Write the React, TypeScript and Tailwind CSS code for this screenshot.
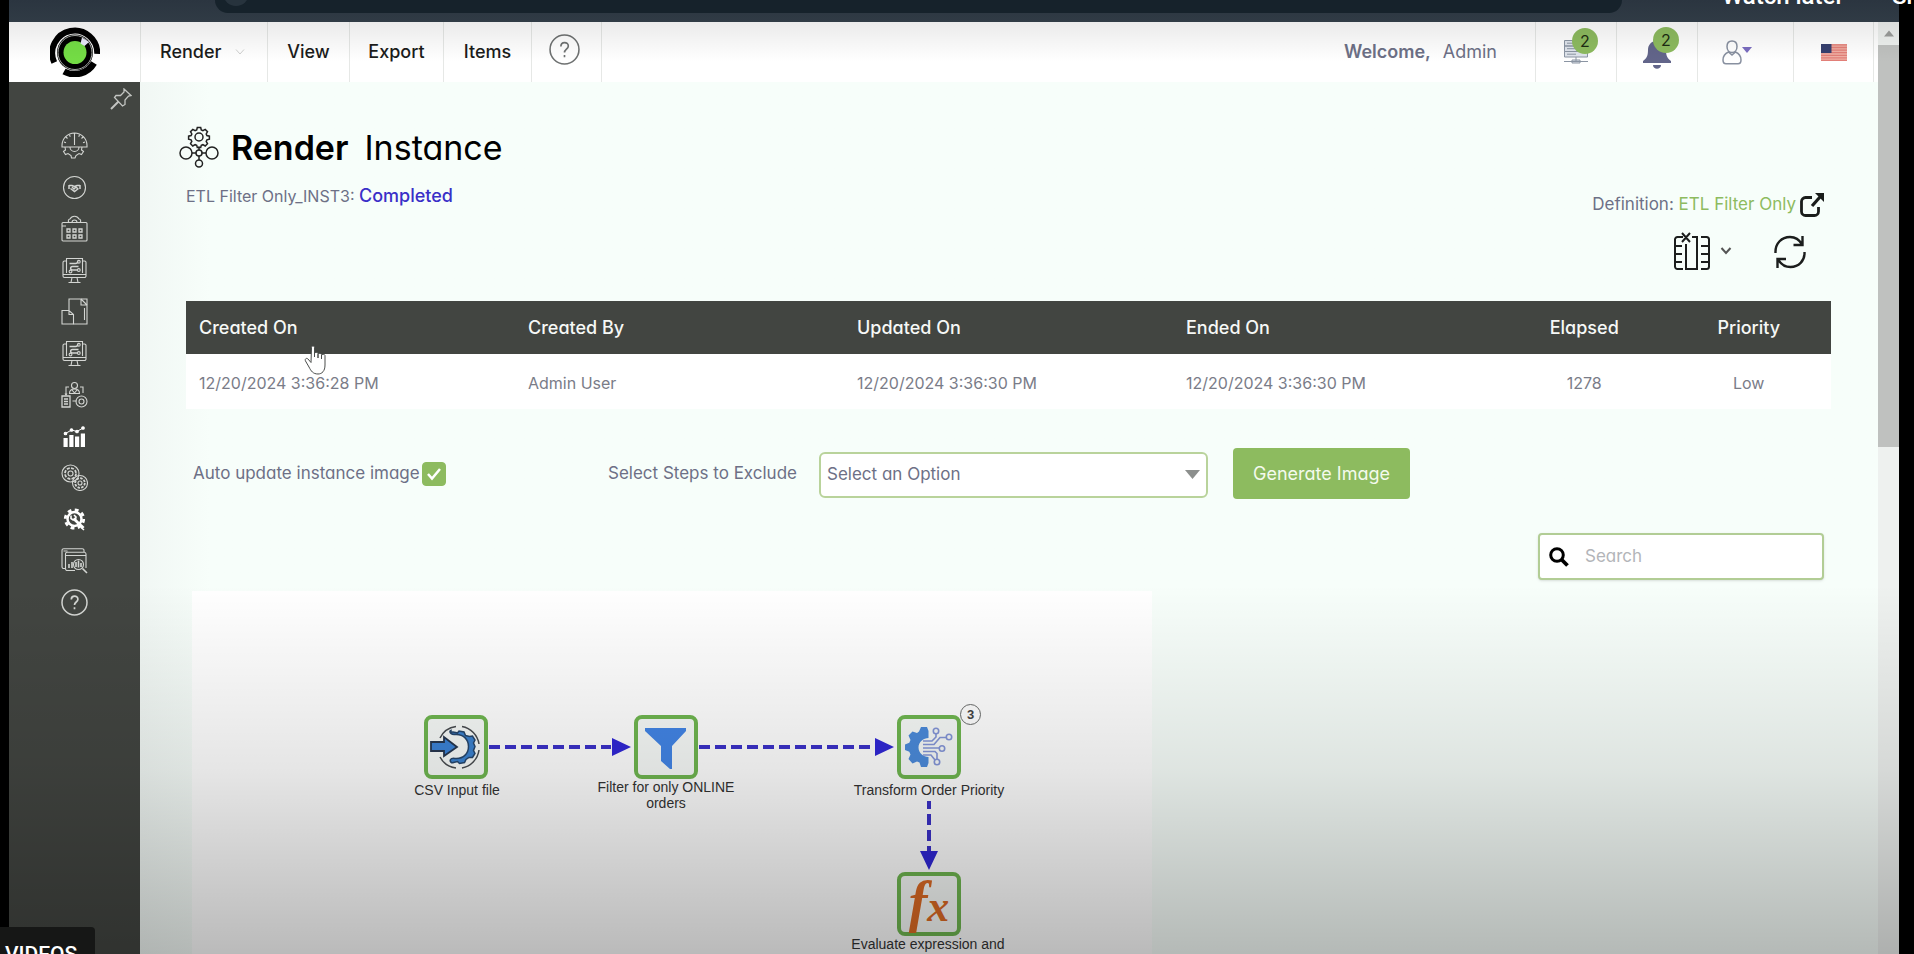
import type { ReactNode } from "react";

const menu = [
  { label: "View", cell: "w-[82px]" },
  { label: "Export", cell: "w-[94px]" },
  { label: "Items", cell: "w-[88px]" },
];

const columns = ["Created On", "Created By", "Updated On", "Ended On", "Elapsed", "Priority"];
const row = ["12/20/2024 3:36:28 PM", "Admin User", "12/20/2024 3:36:30 PM", "12/20/2024 3:36:30 PM", "1278", "Low"];

function Line({ children }: { children: ReactNode }) {
  return (
    <svg viewBox="0 0 27 27" className="size-[27px] fill-none stroke-[#d3d5d2] stroke-[1.1]" aria-hidden="true">
      {children}
    </svg>
  );
}

const flowScreen = (
  <>
    <path d="M5 4H3.500a1.500 1.500 0 0 0-1.500 1.500V19a1.500 1.500 0 0 0 1.500 1.500h20A1.500 1.500 0 0 0 25 19V5.500A1.500 1.500 0 0 0 23.500 4H22M2 17.500h23" />
    <path d="M5.500 16V1.500h16V16M11 20.500l-1 5h7l-1-5M7.500 25.500h12" />
    <path d="M8.500 6.500h6c2 0 2-1.500 3-1.500M17.500 9.500h-6c-2.500 0-2.500 3.500 0 3.500h5" strokeWidth="1.500" />
    <circle cx="17.800" cy="4.800" r="1.400" />
    <circle cx="9.500" cy="14.500" r="1.400" />
    <circle cx="17.800" cy="13" r="1.400" />
  </>
);

const sideItems: { name: string; icon: ReactNode }[] = [
  {
    name: "Dashboard",
    icon: (
      <>
        <path d="M1 13.500a12.500 12.500 0 0 1 25 0v1.500H1zM13.500 3v10M13.500 1v2M5 5l1.500 1.500M22 5l-1.500 1.500M3 10l2 .7M24 10l-2 .7M8.500 3l.8 1.800M18.500 3l-.8 1.800" />
        <path d="M9 15a4.500 4.500 0 0 0 9 0M4 15l.5 3-2 1.500 2 3 2.500-1 3 2 .5 2.500h3.500l1-2.500 3-2 2.500 1 2-3-2-1.500.5-3" />
      </>
    ),
  },
  {
    name: "Partners",
    icon: (
      <>
        <circle cx="13.500" cy="13.500" r="11" />
        <path d="M8 11v4M19 11v4M8 11.500h3l2.500 1 2.500-1h3M9.500 14.500l4 3 4-3M11 13l2 2 2-2 2 2" strokeWidth="1.500" />
      </>
    ),
  },
  {
    name: "Calendar",
    icon: (
      <>
        <rect x="1" y="7.500" width="25" height="18.500" rx="1" />
        <path d="M8 7.500a2 2 0 0 1 1-3.500 5 5 0 0 1 9 0 2 2 0 0 1 1 3.500M11 7.500a2.500 2.500 0 0 1 5 0M1 11h4" />
        <path d="M6 14h3v3H6zM12 14h3v3h-3zM18 14h3v3h-3zM6 20h3v3H6zM12 20h3v3h-3zM18 20h3v3h-3z" strokeWidth="1.300" />
      </>
    ),
  },
  { name: "Designs", icon: flowScreen },
  {
    name: "Templates",
    icon: (
      <>
        <path d="M8 12V1h18v25H12.500" />
        <path d="M1 12.500h7l4.500 4V26H1zM8 12.500v4h4.500M20 1v6h6M20 1l6 6M23.500 10v12" />
      </>
    ),
  },
  { name: "Instances", icon: flowScreen },
  {
    name: "Users",
    icon: (
      <>
        <circle cx="13.500" cy="4.500" r="3" />
        <path d="M8.500 12.500c0-3 2-4.500 5-4.500s5 1.500 5 4.500zM11 9l2.500 3L16 9M8 6H5v8M19 6h3v6M4 12.500l1 1.500 1-1.500M11.500 20h4" />
        <path d="M1 15h8v11H1zM3 18h4M3 20.500h4M3 23h4" strokeWidth="1.300" />
        <circle cx="20.500" cy="20.500" r="5.500" />
        <circle cx="20.500" cy="20.500" r="2.500" />
      </>
    ),
  },
  {
    name: "Reports",
    icon: (
      <g className="fill-white stroke-white">
        <path d="M2.500 15h4.200v9H2.500zM8.300 12h4.200v12H8.300zM14 13.500h4.200V24H14zM19.800 10.500H24V24h-4.200z" stroke="none" />
        <path d="M4.500 10.500l6-3.500 5.500 1.500 6-3.500" fill="none" strokeWidth="1" />
        <circle cx="4.500" cy="10.500" r="1.300" />
        <circle cx="10.500" cy="7" r="1.300" />
        <circle cx="16" cy="8.500" r="1.300" />
        <circle cx="22" cy="5" r="1.300" />
      </g>
    ),
  },
  {
    name: "Processes",
    icon: (
      <>
        <circle cx="9.500" cy="9.500" r="8.500" />
        <circle cx="9.500" cy="9.500" r="5.500" strokeDasharray="3 1.300" strokeWidth="1.800" />
        <circle cx="9.500" cy="9.500" r="2.500" />
        <circle cx="19" cy="19" r="7.500" />
        <circle cx="19" cy="19" r="4.800" strokeDasharray="2.500 1.200" strokeWidth="1.800" />
        <circle cx="19" cy="19" r="2" />
      </>
    ),
  },
  {
    name: "Settings",
    icon: (
      <g className="stroke-white">
        <circle cx="13.500" cy="13" r="7" strokeWidth="2.500" />
        <circle cx="13.500" cy="13" r="9.200" strokeWidth="2.800" strokeDasharray="3.800 3.425" />
        <path d="M12.500 12.500l10 9.500" strokeWidth="3" />
        <path d="M10 9.500v3l2 1.500 2.500-.5.500-2.500-2-2M20 21.500l3 2.500" strokeWidth="1.600" />
      </g>
    ),
  },
  {
    name: "Analytics",
    icon: (
      <>
        <path d="M4.500 21.500H3A1.800 1.800 0 0 1 1 19.700V3.500A1.800 1.800 0 0 1 2.800 1.700h18.400A1.800 1.800 0 0 1 23 3.500V5" />
        <path d="M14 23.500H6.500A1.800 1.800 0 0 1 4.500 21.700V7A1.800 1.800 0 0 1 6.300 5.200h17A1.800 1.800 0 0 1 25 7v14M5 8.500h20M2.500 4h4" />
        <circle cx="17.500" cy="17.500" r="5" />
        <path d="M8 21v-4M11 21v-6M15 20v-5M17.500 20.500v-7M20 20v-4M21.500 21.500l4.500 4.500" strokeWidth="1.600" />
      </>
    ),
  },
  {
    name: "Help",
    icon: (
      <>
        <circle cx="13.500" cy="13.500" r="12.500" strokeWidth="1.500" />
        <path d="M10.300 10.500c0-4.500 6.600-4.300 6.600-.3 0 2.800-3.400 2.800-3.400 5.800M13.500 18.300v2" strokeWidth="1.700" />
      </>
    ),
  },
];

function Logo() {
  return (
    <svg viewBox="0 0 50 50" className="size-[50px]" aria-hidden="true">
      <circle cx="25" cy="25.500" r="18" fill="#000" />
      <path d="M4.300 35.500A22.500 22.500 0 1 1 47.200 27" fill="none" stroke="#000" strokeWidth="6" />
      <path d="M14 44.500A22.500 22.500 0 0 0 44 36" fill="none" stroke="#000" strokeWidth="6.500" />
      <circle cx="25" cy="25.500" r="17" fill="none" stroke="#b9bdb9" strokeWidth=".9" />
      <circle cx="25" cy="25.500" r="11.500" fill="#74dd45" />
      <path d="M32 10.500l7 4.500-4.500 4-4-2.500z" fill="#e8eafa" />
    </svg>
  );
}

function Node({ place, children }: { place: string; children: ReactNode }) {
  return (
    <div className={`absolute flex size-16 items-center justify-center rounded-lg border-4 border-[#6fb650] bg-[#f7faf8] ${place}`}>
      {children}
    </div>
  );
}

function NodeLabel({ place, children }: { place: string; children: ReactNode }) {
  return (
    <p className={`absolute w-44 text-center font-['Liberation_Sans',sans-serif] text-sm leading-4 text-[#333] ${place}`}>
      {children}
    </p>
  );
}

function Count() {
  return (
    <span className="absolute -top-3 left-2 flex size-[26px] items-center justify-center rounded-full bg-[#8dbb5f] text-base text-[#1d2b12]">
      2
    </span>
  );
}

export default function App() {
  return (
    <div className="relative flex h-screen overflow-hidden bg-black pr-[15px] pl-[9px] font-[Inter,sans-serif] text-[#6d7086] [font-feature-settings:'cv11']">
      <div className="flex min-w-0 flex-1 flex-col">
        <div className="h-[22px] shrink-0 bg-linear-to-b from-[#2b3540] to-[#303b45] pr-[277px] pl-[206px]">
          <div className="h-[13px] overflow-hidden rounded-b-2xl bg-[#16222b] pl-2">
            <div className="-mt-5 size-[26px] rounded-full bg-[#27333d]" />
          </div>
        </div>

        <div className="flex min-h-0 flex-1">
          <div className="flex min-w-0 flex-1 flex-col">
            <header className="flex h-[60px] shrink-0 bg-white text-lg">
              <a href="#home" aria-label="Home" className="flex w-[131px] items-center justify-center">
                <Logo />
              </a>
              <nav className="flex font-medium text-[#1b1c1b]">
                <button type="button" className="flex w-[128px] items-center gap-3.5 border-r border-l border-[#e6e8e6] pl-[19px]">
                  Render
                  <svg viewBox="0 0 10 6" className="h-1.5 w-2.5 fill-none stroke-[#cfd0cf]" aria-hidden="true">
                    <path d="M1 .5l4 4.500L9 .5" />
                  </svg>
                </button>
                {menu.map((m) => (
                  <button key={m.label} type="button" className={`border-r border-[#e6e8e6] ${m.cell}`}>
                    {m.label}
                  </button>
                ))}
                <button type="button" aria-label="Help" className="flex w-[70px] justify-center border-r border-[#e6e8e6] pt-3 pr-1">
                  <svg viewBox="0 0 30 30" className="size-[31px] fill-none stroke-[#6e7171]" aria-hidden="true">
                    <circle cx="15" cy="15" r="14" strokeWidth="1.500" />
                    <path d="M11.500 12c0-5 7.200-4.800 7.200-.4 0 3-3.700 3.200-3.700 6.400M15 20.300v2.200" strokeWidth="1.600" />
                  </svg>
                </button>
              </nav>
              <p className="ml-auto flex items-center gap-3 pr-[38px] whitespace-nowrap">
                <span className="font-semibold">Welcome,</span>
                <span>Admin</span>
              </p>
              <button type="button" aria-label="Queue" className="flex w-[81px] items-center border-l border-[#e6e8e6] pl-7">
                <span className="relative">
                  <svg viewBox="0 0 24 24" className="size-6 fill-[#dfe4ec] stroke-[#8b95a3]" aria-hidden="true">
                    <path d="M.5.5h23v5.500H.5zM.5 6h23v5.500H.5zM.5 11.500h23V17H.5zM3 3.200h9M3 8.700h9M3 14.200h9M12 17v4M0 21.500h24M8 20h8v3H8z" />
                  </svg>
                  <Count />
                </span>
              </button>
              <button type="button" aria-label="Notifications" className="flex w-[81px] items-center border-l border-[#e6e8e6] pl-[26px]">
                <span className="relative">
                  <svg viewBox="0 0 28 30" className="mt-1 h-[30px] w-7 fill-[#62658a]" aria-hidden="true">
                    <path d="M14 0c1 0 1.800.8 1.800 1.800C20 2.700 23 6.200 23 11c0 6 1.500 8.500 5 11v2H0v-2c3.500-2.500 5-5 5-11 0-4.800 3-8.300 7.200-9.200C12.200.8 13 0 14 0zM10 26h8c0 5-8 5-8 0z" />
                  </svg>
                  <span className="absolute -top-2 left-2.5 flex size-[26px] items-center justify-center rounded-full bg-[#8dbb5f] text-base text-[#1d2b12]">
                    2
                  </span>
                </span>
              </button>
              <button type="button" aria-label="Account" className="flex w-[96px] items-center border-l border-[#e6e8e6] pl-6">
                <svg viewBox="0 0 20 25" className="h-[25px] w-5 fill-none stroke-[#8890a0] stroke-[1.500]" aria-hidden="true">
                  <path d="M10 1c3.300 0 5 2.500 5 5.500S13.300 12.500 10 12.500 5 9.500 5 6.500 6.700 1 10 1zM6.500 12C3 13.500 1 16 1 20c0 2 1 3.800 3 3.800h12c2 0 3-1.800 3-3.800 0-4-2-6.500-5.500-8l-3.500 3z" />
                </svg>
                <svg viewBox="0 0 10 6" className="mb-1 h-1.5 w-2.5 fill-[#7a6cc0]" aria-hidden="true">
                  <path d="M0 0h10L5 6z" />
                </svg>
              </button>
              <button type="button" aria-label="Language" className="mr-1 flex w-[81px] items-center justify-center border-r border-l border-[#e6e8e6]">
                <svg viewBox="0 0 26 17" className="h-[17px] w-[26px]" aria-hidden="true">
                  <path d="M0 0h26v17H0z" fill="#f0b0a5" />
                  <path d="M0 .8h26M0 3.500h26M0 6.100h26M0 8.700h26M0 11.300h26M0 13.900h26M0 16.300h26" stroke="#e27f78" strokeWidth="1.300" />
                  <path d="M0 0h10.500v9H0z" fill="#36406f" />
                </svg>
              </button>
            </header>

            <div className="flex min-h-0 flex-1">
              <aside className="w-[131px] shrink-0 bg-[#424541]">
                <button type="button" aria-label="Pin menu" className="mt-1.5 mr-2 ml-auto block">
                  <svg viewBox="0 0 22 22" className="size-[22px] fill-none stroke-[#c3c5c2] stroke-[1.300]" aria-hidden="true">
                    <path d="M14 1l7 6.500-2.500.5-3.500 4v4.500L12.500 18 4.500 9.500 6 7.500h4.500l3.500-3.500z" />
                    <path d="M8.500 13.500L1 21" strokeWidth="2" />
                  </svg>
                </button>
                <nav className="mt-[22px] flex h-[484px] flex-col items-center justify-between">
                  {sideItems.map((s) => (
                    <a key={s.name} href="#menu" aria-label={s.name}>
                      <Line>{s.icon}</Line>
                    </a>
                  ))}
                </nav>
              </aside>

              <main className="min-w-0 flex-1 overflow-hidden bg-linear-to-r from-[#f1f7f4] to-[#f7fefa] to-4% pr-[47px] pl-[46px]">
                <section className="flex justify-between pb-[30px]">
                  <div className="pt-[42px]">
                    <h1 className="flex h-[46px] items-center text-[34px] whitespace-nowrap text-black">
                      <svg viewBox="0 0 40 42" className="mr-3 -ml-[7px] h-[42px] w-10 fill-none stroke-[#222] stroke-[1.500]" aria-hidden="true">
                        <path d="M18.300 1.500h3.400l.6 2.500 1.600.7 2.300-1.300 2.300 2.300-1.300 2.300.7 1.600 2.500.6v3l-2.500.6-.7 1.600 1.300 2.300-2.300 2.300-2.300-1.300-1.600.7-.6 2.100h-3.400l-.6-2.100-1.600-.7-2.300 1.300-2.300-2.300 1.300-2.300-.7-1.600-2.500-.6v-3l2.500-.6.7-1.600-1.300-2.300 2.300-2.300 2.300 1.300 1.600-.7z" />
                        <circle cx="20" cy="11" r="4" />
                        <circle cx="20" cy="27" r="3" />
                        <circle cx="7" cy="27" r="6" />
                        <circle cx="33" cy="27" r="6" />
                        <circle cx="20" cy="37.500" r="3.500" />
                        <path d="M20 20.500V24M20 30v4M13 27h4M23 27h4" />
                      </svg>
                      <span className="font-semibold">Render</span>
                      <span className="ml-4">Instance</span>
                    </h1>
                    <p className="mt-3 h-7 text-base leading-7">
                      ETL Filter Only_INST3: <span className="text-lg leading-7 font-medium text-[#3a2fc8]">Completed</span>
                    </p>
                  </div>
                  <div className="flex flex-col items-end pt-[109px]">
                    <p className="mr-[7px] flex h-7 items-center text-[17px]">
                      Definition:&nbsp;
                      <a href="#definition" className="flex items-center gap-1 text-[#8dbb5f]">
                        ETL Filter Only
                        <svg viewBox="0 0 24 24" className="size-6 fill-none stroke-[#1a1d1b]" aria-hidden="true">
                          <path d="M12 4.500H5.500A4 4 0 0 0 1.500 8.500v10a4 4 0 0 0 4 4h9a4 4 0 0 0 4-4V14" strokeWidth="2.800" />
                          <path d="M12 13l8-9" strokeWidth="3.200" />
                          <path d="M15 0h9v9z" fill="#1a1d1b" stroke="none" />
                        </svg>
                      </a>
                    </p>
                    <div className="mt-3 mr-[25px] flex h-10 items-center">
                      <button type="button" aria-label="Columns" className="flex items-center gap-2.5">
                        <svg viewBox="0 0 36 38" className="h-[38px] w-9 fill-none stroke-[#1c1e1d] stroke-2" aria-hidden="true">
                          <path d="M9 5H3.500A2.500 2.500 0 0 0 1 7.500v27A2.500 2.500 0 0 0 3.500 37H9M1 14h7M1 22h7M1 30h7M27 5h5.500A2.500 2.500 0 0 1 35 7.500v27a2.500 2.500 0 0 1-2.500 2.500H27M35 14h-8M35 22h-8M35 30h-8M12 12v25h11V5h-5M8 1l8 9M16 1l-8 9" />
                        </svg>
                        <svg viewBox="0 0 12 8" className="h-2 w-3 fill-none stroke-[#555] stroke-2" aria-hidden="true">
                          <path d="M1.500 1L6 6l4.500-5" />
                        </svg>
                      </button>
                      <button type="button" aria-label="Refresh" className="mt-0.5 ml-[42px]">
                        <svg viewBox="0 0 32 36" className="h-9 w-8 fill-none stroke-[#1c1e1d] stroke-[2.400]" aria-hidden="true">
                          <path d="M1.500 19C1 9 8 3 16 3c5 0 9 2 12 7.500M28.500 2v9h-9M30.500 18c.5 9-6 15-14 15-5 0-9-2-12-7M3.500 34v-9H12" />
                        </svg>
                      </button>
                    </div>
                  </div>
                </section>

                <table className="w-full table-fixed text-left">
                  <thead className="bg-[#424541] text-lg text-[#f6f8f6]">
                    <tr className="h-[53px]">
                      {columns.map((c, i) => (
                        <th key={c} scope="col" className={i < 4 ? "w-1/5 pl-[13px] font-medium" : "w-1/10 text-center font-medium"}>
                          {c}
                        </th>
                      ))}
                    </tr>
                  </thead>
                  <tbody className="bg-white text-base text-[#7a7c88]">
                    <tr className="h-[55px]">
                      {row.map((c, i) => (
                        <td key={columns[i]} className={i < 4 ? "pt-0.5 pl-[13px]" : "pt-0.5 text-center"}>
                          {c}
                        </td>
                      ))}
                    </tr>
                  </tbody>
                </table>

                <div className="mt-[39px] flex h-[51px] items-center pl-[7px] text-[17px] whitespace-nowrap">
                  <label className="flex w-[415px] items-center gap-0.5">
                    Auto update instance image
                    <span className="relative flex size-6 items-center justify-center">
                      <input type="checkbox" defaultChecked className="peer size-6 appearance-none rounded border border-[#8dbb5f] checked:bg-[#8dbb5f]" />
                      <svg viewBox="0 0 16 14" className="pointer-events-none absolute hidden h-3.5 w-4 fill-none stroke-white stroke-[2.500] peer-checked:block" aria-hidden="true">
                        <path d="M2 7l4 4.500L14 2" />
                      </svg>
                    </span>
                  </label>
                  <label htmlFor="steps" className="w-[211px]">Select Steps to Exclude</label>
                  <div className="relative mt-0.5 w-[389px]">
                    <select id="steps" className="h-[46px] w-full appearance-none rounded-md border-2 border-[#b9d39b] bg-white pl-1.5 text-[#6d7086]">
                      <option>Select an Option</option>
                    </select>
                    <svg viewBox="0 0 15 9" className="pointer-events-none absolute top-[18px] right-2 h-[9px] w-[15px] fill-[#8c8f8d]" aria-hidden="true">
                      <path d="M0 0h15L7.500 9z" />
                    </svg>
                  </div>
                  <button type="button" className="ml-[25px] h-[51px] w-[177px] rounded bg-[#8dbb5f] text-lg text-[#f4faed]">
                    Generate Image
                  </button>
                </div>

                <label className="mt-[34px] mr-[7px] ml-auto flex h-[47px] w-[286px] items-center gap-4 rounded border-2 border-[#b2cd95] bg-white pl-[9px] text-[17px] shadow-sm">
                  <svg viewBox="0 0 20 20" className="size-5 shrink-0 fill-none stroke-black stroke-3" aria-hidden="true">
                    <circle cx="8" cy="8" r="6.300" />
                    <path d="M12.500 12.500l6 6" strokeWidth="3.800" />
                  </svg>
                  <input type="text" aria-label="Search" placeholder="Search" className="w-full bg-transparent outline-none placeholder:text-[#b3b5b9]" />
                </label>

                <div className="relative mt-[11px] ml-1.5 h-[480px] w-[960px] bg-white">
                  <svg viewBox="0 0 960 480" className="absolute inset-0 h-full w-full fill-none stroke-[#3b31c9] stroke-4" aria-hidden="true">
                    <path d="M297 156h122M507 156h176" strokeDasharray="11 5" />
                    <path d="M737 210v52" strokeDasharray="11 5" strokeDashoffset="3" />
                    <path d="M420 147l19 9-19 9zM683 147l19 9-19 9zM728 260h18l-9 19z" className="fill-[#3027d6] stroke-none" />
                  </svg>

                  <Node place="top-[124px] left-[232px]">
                    <svg viewBox="0 0 56 56" className="size-14 fill-none" aria-hidden="true">
                      <g stroke="#474b4f" strokeWidth="1.500">
                        <path d="M12 19a21 21 0 0 1 16-11.500M34 7.500A21 21 0 0 1 51 25M51 31a21 21 0 0 1-17 18M28 49a21 21 0 0 1-16-11" />
                      </g>
                      <path d="M23 13.500c2-1.500 4 0 6.500.5l1.500-2 5 1 1.500 3.500 4 1 3-.5 2.500 4-1.500 3 1.500 3.500-1.500 4 1.500 3-2.500 4-3.500 0-3 2-1.500 3-5 1-2-2-4 1c-2 1-4-1-3-3s4-1 6-1c7 0 12-5 12-12s-5-12-12-12c-2 0-5 0-6-1.500s-.500-2 .5-2.500z" fill="#3b82cf" stroke="#26466b" strokeWidth="1.500" />
                      <path d="M3 23h13v-5l13 10-13 9v-5H3z" fill="#3b82d6" stroke="#26364e" strokeWidth="1.800" />
                    </svg>
                  </Node>
                  <Node place="top-[124px] left-[442px]">
                    <svg viewBox="0 0 56 56" className="size-14 fill-[#4285e6]" aria-hidden="true">
                      <path d="M7 9h41v3L34 27v23h-2l-9-8V27L7 12z" />
                    </svg>
                  </Node>
                  <Node place="top-[124px] left-[705px]">
                    <svg viewBox="0 0 56 56" className="size-14 fill-none" aria-hidden="true">
                      <path d="M18 12.500l2-4.500h6l1.500 4v7c-5 0-10 4-10 9.500s5 9.500 10 9.500v6L26 48h-6l-1.500-4.500-2.500-1-4.500 2L7.500 40l2-4.500-1.200-2.800L4 31v-5.500l4.300-1.700 1.200-2.800-2-4.500 4-4 4.500 1.500z" fill="#4b8bdb" />
                      <g stroke="#8496d8" strokeWidth="1.600">
                        <path d="M22 22h9l4-4v-3M22 25.500h11l6-7h6M22 29h16M22 32.500h12l2 2v6M22 36h8l4 5" />
                        <circle cx="35" cy="12" r="2.700" />
                        <circle cx="48" cy="18" r="2.700" />
                        <circle cx="41" cy="29.500" r="2.700" />
                        <circle cx="36" cy="43" r="2.700" />
                      </g>
                    </svg>
                  </Node>
                  <span className="absolute top-[113px] left-[768px] flex size-[21px] items-center justify-center rounded-full border border-[#6a6c6b] font-['Liberation_Sans',sans-serif] text-[13px] font-bold text-[#444]">
                    3
                  </span>
                  <Node place="top-[281px] left-[705px]">
                    <span className="pb-1 font-['Liberation_Serif',serif] text-[56px] leading-none font-bold text-[#dc6a24] italic">
                      f<span className="text-[44px]">x</span>
                    </span>
                  </Node>

                  <NodeLabel place="top-[191px] left-[177px]">CSV Input file</NodeLabel>
                  <NodeLabel place="top-[188px] left-[386px]">
                    Filter for only ONLINE
                    <br />
                    orders
                  </NodeLabel>
                  <NodeLabel place="top-[191px] left-[649px]">Transform Order Priority</NodeLabel>
                  <NodeLabel place="top-[345px] left-[648px]">
                    Evaluate expression and
                    <br />
                    database
                  </NodeLabel>
                </div>
              </main>
            </div>
          </div>

          <div className="flex w-[21px] shrink-0 flex-col items-center bg-[#eef1ef]">
            <svg viewBox="0 0 10 6" className="my-2 h-[7px] w-2.5 fill-[#9b9d9b]" aria-hidden="true">
              <path d="M0 6h10L5 0z" />
            </svg>
            <div className="h-[402px] w-full bg-[#bfc1bf]" />
          </div>
        </div>
      </div>

      <div className="pointer-events-none absolute inset-x-0 top-[22px] h-10 bg-linear-to-b from-black/8 to-transparent" />
      <div className="pointer-events-none absolute inset-x-0 bottom-0 h-[370px] bg-linear-to-b from-transparent via-black/10 to-black/27" />
      <div className="absolute -top-4 left-[1722px] flex gap-12 font-[Roboto,sans-serif] text-2xl leading-6 font-medium whitespace-nowrap text-white">
        <span>Watch later</span>
        <span>Share</span>
      </div>
      <div className="absolute bottom-0 left-0 h-[27px] w-[95px] overflow-hidden rounded-tr bg-[#161716] pt-[17px] pl-[5px] font-[Roboto,sans-serif] text-[21px] leading-5 font-medium text-white">
        VIDEOS
      </div>

      <svg viewBox="0 0 24 30" className="pointer-events-none absolute top-[345px] left-[304px] h-[30px] w-6 fill-white stroke-[#4a4d4b]" aria-hidden="true">
        <path d="M7.500 2.500C7.500.5 10.500.5 10.500 2.500V12 8.500c0-1.500 3.500-1.500 3.500 0V13 9.500c0-1.500 3.500-1.500 3.500 0V14v-3.500c0-1.500 3.500-1.500 3.500 0V20c0 6-3 9-7 9-5 0-7-3-9-7l-3.500-6c-1-2 1-3.500 2.500-2l3 3.500z" />
      </svg>
    </div>
  );
}
